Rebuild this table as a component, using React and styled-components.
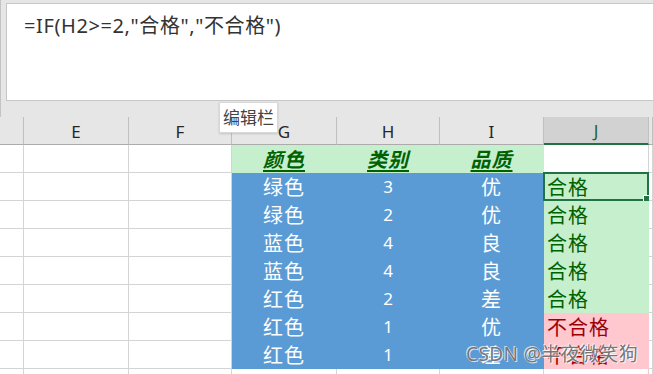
import React from 'react';
import styled, { createGlobalStyle, css } from 'styled-components';

const GlobalStyle = createGlobalStyle`
  html, body {
    margin: 0;
    padding: 0;
    background: #ffffff;
    overflow: hidden;
  }
  body {
    font-family: 'Noto Sans', 'Noto Sans CJK SC', sans-serif;
  }
`;

const Sheet = styled.div`
  position: relative;
  width: 653px;
  height: 374px;
  overflow: hidden;
  background: #ffffff;
`;

const FormulaArea = styled.div`
  height: 117px;
  box-sizing: border-box;
  padding: 3px 0 0 5px;
  background: #e6e6e6;
  border-left: 1px solid #c4c4c4;
`;

const FormulaBox = styled.div`
  height: 98px;
  box-sizing: border-box;
  background: #ffffff;
  border: 1px solid #c6c6c6;
  border-right: none;
  padding: 6px 0 0 17px;
  font-family: 'Noto Sans', 'Noto Sans CJK SC', sans-serif;
  font-size: 20px;
  letter-spacing: 0.6px;
  color: #333333;
  white-space: nowrap;
`;

const Grid = styled.div`
  display: grid;
  grid-template-columns: 24px 105px 103px 105px 103px 104px 105px 1fr;
  grid-auto-rows: 28px;
`;

const fills = {
  blank: { bg: '#ffffff', line: '#d4d4d4', color: '#000000' },
  head: { bg: '#c6efce', line: '#c6efce', color: '#006100' },
  blue: { bg: '#5b9bd5', line: '#5b9bd5', color: '#ffffff' },
  good: { bg: '#c6efce', line: '#c6efce', color: '#006100' },
  bad: { bg: '#ffc7ce', line: '#ffc7ce', color: '#9c0006' },
};

const ColHeader = styled.div`
  box-sizing: border-box;
  display: flex;
  align-items: flex-end;
  justify-content: center;
  padding-bottom: 1px;
  background: ${(p) => (p.active ? '#d2d2d2' : '#e6e6e6')};
  border-right: 1px solid #c0c0c0;
  border-bottom: ${(p) => (p.active ? '2px solid #217346' : '1px solid #ababab')};
  font-size: 17px;
  color: ${(p) => (p.active ? '#1f5f3a' : '#262626')};
`;

const Cell = styled.div`
  position: relative;
  box-sizing: border-box;
  display: flex;
  align-items: center;
  justify-content: ${(p) => (p.left ? 'flex-start' : 'center')};
  padding-left: ${(p) => (p.left ? '3px' : '0')};
  background: ${(p) => fills[p.fill].bg};
  border-right: 1px solid ${(p) => fills[p.fill].line};
  border-bottom: 1px solid ${(p) => fills[p.fill].line};
  color: ${(p) => fills[p.fill].color};
  font-family: 'Noto Sans', 'Noto Sans CJK SC', sans-serif;
  font-size: ${(p) => (p.num ? '17px' : '20px')};
  letter-spacing: ${(p) => (p.num ? '0' : '1px')};
  white-space: nowrap;
  ${(p) => p.fill === 'head' && css`
    font-weight: bold;
    font-style: italic;
    text-decoration: underline;
    text-underline-offset: 3px;
  `}
`;

const ActiveFrame = styled.div`
  position: absolute;
  left: -1px;
  top: -1px;
  right: -1px;
  bottom: -1px;
  border: 2px solid #217346;
  pointer-events: none;
`;

const FillHandle = styled.div`
  position: absolute;
  right: -4px;
  bottom: -4px;
  width: 6px;
  height: 6px;
  background: #217346;
  border: 1px solid #ffffff;
`;

const Tooltip = styled.div`
  position: absolute;
  left: 219px;
  top: 102px;
  padding: 1px 3px 3px;
  background: #ffffff;
  border: 1px solid #d8d8d8;
  box-shadow: 0 1px 2px rgba(0, 0, 0, 0.15);
  font-family: 'Noto Sans CJK SC', sans-serif;
  font-size: 17px;
  color: #444444;
`;

const Watermark = styled.div`
  position: absolute;
  left: 466px;
  top: 339px;
  font-family: 'Noto Sans', 'Noto Sans CJK SC', sans-serif;
  font-size: 19px;
  letter-spacing: 0.4px;
  color: rgba(100, 100, 100, 0.9);
  text-shadow: 0 0 1px #ffffff, 1px 1px 0 rgba(255, 255, 255, 0.7), -1px -1px 0 rgba(255, 255, 255, 0.7);
  white-space: nowrap;
`;

const columns = ['', 'E', 'F', 'G', 'H', 'I', 'J', ''];

const rows = [
  ['颜色', '类别', '品质', null],
  ['绿色', '3', '优', '合格'],
  ['绿色', '2', '优', '合格'],
  ['蓝色', '4', '良', '合格'],
  ['蓝色', '4', '良', '合格'],
  ['红色', '2', '差', '合格'],
  ['红色', '1', '优', '不合格'],
  ['红色', '1', '差', '不合格'],
];

const App = () => (
  <Sheet>
    <GlobalStyle />
    <FormulaArea>
      <FormulaBox>=IF(H2&gt;=2,"合格","不合格")</FormulaBox>
    </FormulaArea>
    <Grid>
      {columns.map((c, i) => (
        <ColHeader key={`h${i}`} active={c === 'J'}>{c}</ColHeader>
      ))}
      {rows.map((r, ri) => {
        const isHead = ri === 0;
        const tableFill = isHead ? 'head' : 'blue';
        let resultFill = 'blank';
        if (r[3] === '合格') resultFill = 'good';
        if (r[3] === '不合格') resultFill = 'bad';
        return (
          <React.Fragment key={`r${ri}`}>
            <Cell fill="blank" />
            <Cell fill="blank" />
            <Cell fill="blank" />
            <Cell fill={tableFill}>{r[0]}</Cell>
            <Cell fill={tableFill} num={!isHead}>{r[1]}</Cell>
            <Cell fill={tableFill}>{r[2]}</Cell>
            <Cell fill={resultFill} left>
              {r[3]}
              {ri === 1 && (
                <ActiveFrame>
                  <FillHandle />
                </ActiveFrame>
              )}
            </Cell>
            <Cell fill="blank" />
          </React.Fragment>
        );
      })}
      {columns.map((c, i) => (
        <Cell key={`t${i}`} fill="blank" />
      ))}
    </Grid>
    <Tooltip>编辑栏</Tooltip>
    <Watermark>CSDN @半夜微笑狗</Watermark>
  </Sheet>
);

export default App;
